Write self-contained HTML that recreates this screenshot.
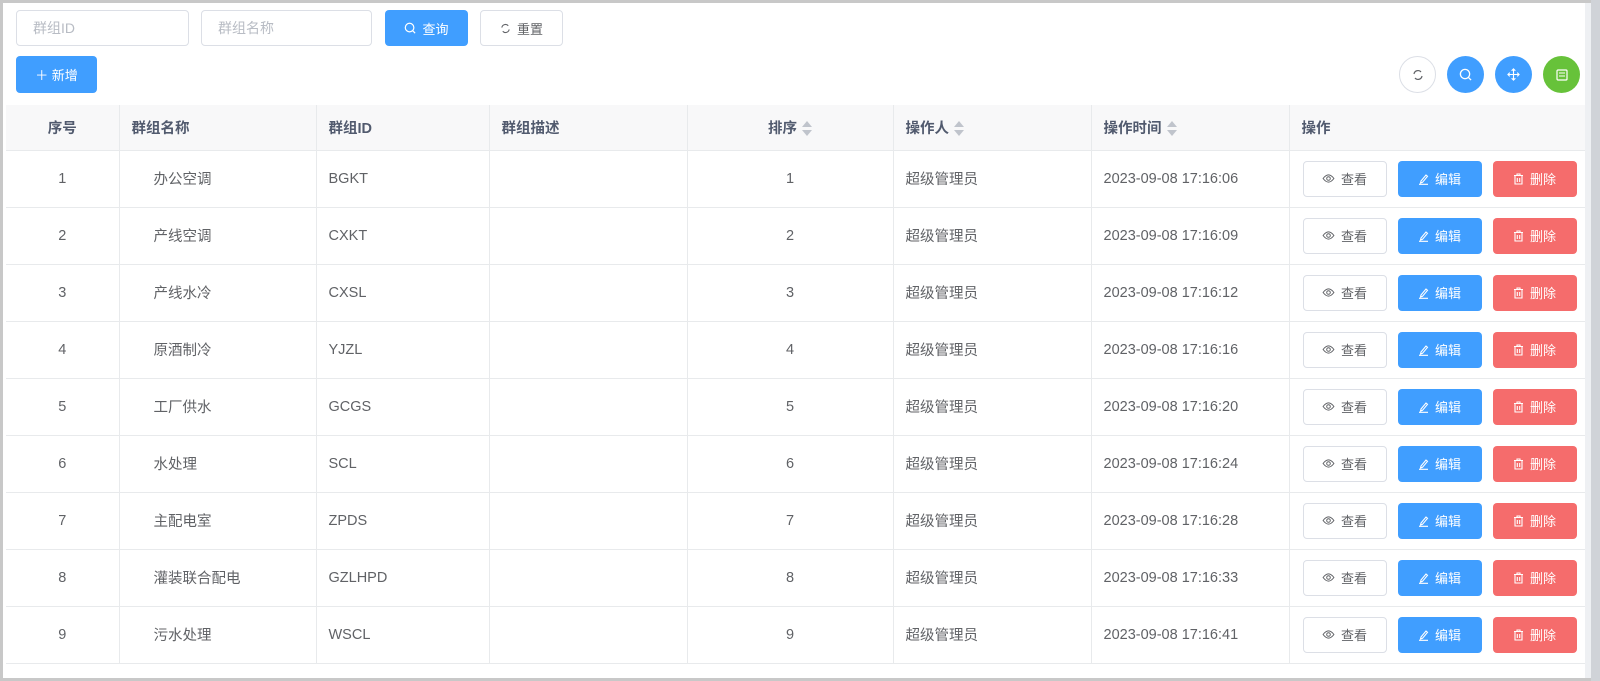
<!DOCTYPE html>
<html><head><meta charset="utf-8"><style>
*{box-sizing:border-box;margin:0;padding:0}
body{width:1600px;height:681px;background:#fff;font-family:"Liberation Sans","Noto Sans CJK SC",sans-serif;font-size:14px;color:#606266;position:relative;overflow:hidden}
.frame{position:absolute;left:0;top:0;width:1600px;height:681px;border-left:3px solid #c8c8c8;border-top:3px solid #c8c8c8;border-bottom:3px solid #c8c8c8;}
.rs{position:absolute;left:1585px;top:3px;width:6px;height:675px;background:#eef0f3}
.rs2{position:absolute;left:1591px;top:0;width:9px;height:681px;background:#d0d3d8}
.abs{position:absolute}
.inp{border:1px solid #dcdfe6;border-radius:4px;height:36px;top:10px;color:#b8bcc4;padding-left:16px;line-height:34px;font-size:14px}
.btn{border-radius:4px;height:36px;font-size:13px;display:flex;align-items:center;justify-content:center;gap:6px}
.blue{background:#409eff;color:#fff}
.red{background:#f56c6c;color:#fff}
.plain{border:1px solid #dcdfe6;color:#606266;background:#fff}
.circ{width:37px;height:37px;border-radius:50%;top:56px;display:flex;align-items:center;justify-content:center}
table{position:absolute;left:6px;top:105px;width:1579px;border-collapse:collapse;table-layout:fixed}
th{background:#f8f8f9;height:45px;text-align:left;font-weight:bold;color:#515a6e;padding-left:12px;border-bottom:1px solid #e8eaec;border-right:1px solid #e8eaec;font-size:14.5px}
td{height:57px;border-bottom:1px solid #e8eaec;border-right:1px solid #e8eaec;padding-left:12px;font-size:14.5px}
th:last-child,td:last-child{border-right:none}
.c{text-align:center;padding-left:0}
.sort{display:inline-block;vertical-align:middle;margin-left:5px;width:10px;height:16px;position:relative}
.sort:before{content:"";position:absolute;left:0;top:0;border:5px solid transparent;border-bottom:6px solid #c0c4cc;border-top:0}
.sort:after{content:"";position:absolute;left:0;top:9px;border:5px solid transparent;border-top:6px solid #c0c4cc;border-bottom:0}
.ops{display:flex;gap:11px;padding-left:1px}
.ops .btn{width:84px}
</style></head><body>
<div class="frame"></div><div class="rs"></div><div class="rs2"></div>
<div class="abs inp" style="left:16px;width:173px">群组ID</div>
<div class="abs inp" style="left:201px;width:171px">群组名称</div>
<div class="abs btn blue" style="left:385px;top:10px;width:83px"><svg width="12" height="12" viewBox="0 0 14 14"><circle cx="6.5" cy="6.5" r="5" fill="none" stroke="#fff" stroke-width="1.4"/><path d="M10 10l3 3" stroke="#fff" stroke-width="1.4"/></svg>查询</div>
<div class="abs btn plain" style="left:480px;top:10px;width:83px"><svg width="11" height="11" viewBox="0 0 12 12"><path d="M2 5a4 4 0 0 1 7-2M10 7a4 4 0 0 1-7 2" fill="none" stroke="#606266" stroke-width="1.2"/></svg>重置</div>
<div class="abs btn blue" style="left:16px;top:56px;width:81px;height:37px">＋ 新增</div>
<div class="abs circ" style="left:1399px;border:1px solid #dcdfe6"><svg width="12" height="12" viewBox="0 0 12 12"><path d="M2 5a4 4 0 0 1 7-2M10 7a4 4 0 0 1-7 2" fill="none" stroke="#606266" stroke-width="1.2"/></svg></div>
<div class="abs circ blue" style="left:1447px"><svg width="13" height="13" viewBox="0 0 14 14"><circle cx="6.5" cy="6.5" r="5" fill="none" stroke="#fff" stroke-width="1.4"/><path d="M10 10l3 3" stroke="#fff" stroke-width="1.4"/></svg></div>
<div class="abs circ blue" style="left:1495px"><svg width="13" height="13" viewBox="0 0 14 14"><path d="M7 1v12M1 7h12M5 3l2-2 2 2M5 11l2 2 2-2M3 5L1 7l2 2M11 5l2 2-2 2" fill="none" stroke="#fff" stroke-width="1.2"/></svg></div>
<div class="abs circ" style="left:1543px;background:#67c23a"><svg width="12" height="12" viewBox="0 0 12 12"><rect x="1" y="1" width="10" height="10" rx="1" fill="none" stroke="#fff" stroke-width="1.2"/><path d="M3 4h6M3 7h6" stroke="#fff"/></svg></div>
<table>
<colgroup><col style="width:113px"><col style="width:197px"><col style="width:173px"><col style="width:198px"><col style="width:206px"><col style="width:198px"><col style="width:198px"><col></colgroup>
<tr><th class="c">序号</th><th>群组名称</th><th>群组ID</th><th>群组描述</th><th class="c">排序<span class="sort"></span></th><th>操作人<span class="sort"></span></th><th>操作时间<span class="sort"></span></th><th>操作</th></tr>
<tr><td class="c">1</td><td style="padding-left:34px">办公空调</td><td>BGKT</td><td></td><td class="c">1</td><td>超级管理员</td><td>2023-09-08 17:16:06</td><td><div class="ops"><div class="btn plain"><svg width="13" height="9" viewBox="0 0 14 10"><path d="M1 5q6-8 12 0q-6 8-12 0z" fill="none" stroke="#606266" stroke-width="1.1"/><circle cx="7" cy="5" r="2" fill="none" stroke="#606266" stroke-width="1.1"/></svg>查看</div><div class="btn blue"><svg width="11" height="12" viewBox="0 0 11 12"><path d="M3 8l5-6 1.5 1.3-5 6L2.5 10z M1 11.3h9" fill="none" stroke="#fff" stroke-width="1.1"/></svg>编辑</div><div class="btn red"><svg width="11" height="12" viewBox="0 0 11 12"><path d="M1 2.5h9M4 2.5V1h3v1.5M2 2.5v8.5h7V2.5M4.3 5v4M6.7 5v4" fill="none" stroke="#fff" stroke-width="1.1"/></svg>删除</div></div></td></tr>
<tr><td class="c">2</td><td style="padding-left:34px">产线空调</td><td>CXKT</td><td></td><td class="c">2</td><td>超级管理员</td><td>2023-09-08 17:16:09</td><td><div class="ops"><div class="btn plain"><svg width="13" height="9" viewBox="0 0 14 10"><path d="M1 5q6-8 12 0q-6 8-12 0z" fill="none" stroke="#606266" stroke-width="1.1"/><circle cx="7" cy="5" r="2" fill="none" stroke="#606266" stroke-width="1.1"/></svg>查看</div><div class="btn blue"><svg width="11" height="12" viewBox="0 0 11 12"><path d="M3 8l5-6 1.5 1.3-5 6L2.5 10z M1 11.3h9" fill="none" stroke="#fff" stroke-width="1.1"/></svg>编辑</div><div class="btn red"><svg width="11" height="12" viewBox="0 0 11 12"><path d="M1 2.5h9M4 2.5V1h3v1.5M2 2.5v8.5h7V2.5M4.3 5v4M6.7 5v4" fill="none" stroke="#fff" stroke-width="1.1"/></svg>删除</div></div></td></tr>
<tr><td class="c">3</td><td style="padding-left:34px">产线水冷</td><td>CXSL</td><td></td><td class="c">3</td><td>超级管理员</td><td>2023-09-08 17:16:12</td><td><div class="ops"><div class="btn plain"><svg width="13" height="9" viewBox="0 0 14 10"><path d="M1 5q6-8 12 0q-6 8-12 0z" fill="none" stroke="#606266" stroke-width="1.1"/><circle cx="7" cy="5" r="2" fill="none" stroke="#606266" stroke-width="1.1"/></svg>查看</div><div class="btn blue"><svg width="11" height="12" viewBox="0 0 11 12"><path d="M3 8l5-6 1.5 1.3-5 6L2.5 10z M1 11.3h9" fill="none" stroke="#fff" stroke-width="1.1"/></svg>编辑</div><div class="btn red"><svg width="11" height="12" viewBox="0 0 11 12"><path d="M1 2.5h9M4 2.5V1h3v1.5M2 2.5v8.5h7V2.5M4.3 5v4M6.7 5v4" fill="none" stroke="#fff" stroke-width="1.1"/></svg>删除</div></div></td></tr>
<tr><td class="c">4</td><td style="padding-left:34px">原酒制冷</td><td>YJZL</td><td></td><td class="c">4</td><td>超级管理员</td><td>2023-09-08 17:16:16</td><td><div class="ops"><div class="btn plain"><svg width="13" height="9" viewBox="0 0 14 10"><path d="M1 5q6-8 12 0q-6 8-12 0z" fill="none" stroke="#606266" stroke-width="1.1"/><circle cx="7" cy="5" r="2" fill="none" stroke="#606266" stroke-width="1.1"/></svg>查看</div><div class="btn blue"><svg width="11" height="12" viewBox="0 0 11 12"><path d="M3 8l5-6 1.5 1.3-5 6L2.5 10z M1 11.3h9" fill="none" stroke="#fff" stroke-width="1.1"/></svg>编辑</div><div class="btn red"><svg width="11" height="12" viewBox="0 0 11 12"><path d="M1 2.5h9M4 2.5V1h3v1.5M2 2.5v8.5h7V2.5M4.3 5v4M6.7 5v4" fill="none" stroke="#fff" stroke-width="1.1"/></svg>删除</div></div></td></tr>
<tr><td class="c">5</td><td style="padding-left:34px">工厂供水</td><td>GCGS</td><td></td><td class="c">5</td><td>超级管理员</td><td>2023-09-08 17:16:20</td><td><div class="ops"><div class="btn plain"><svg width="13" height="9" viewBox="0 0 14 10"><path d="M1 5q6-8 12 0q-6 8-12 0z" fill="none" stroke="#606266" stroke-width="1.1"/><circle cx="7" cy="5" r="2" fill="none" stroke="#606266" stroke-width="1.1"/></svg>查看</div><div class="btn blue"><svg width="11" height="12" viewBox="0 0 11 12"><path d="M3 8l5-6 1.5 1.3-5 6L2.5 10z M1 11.3h9" fill="none" stroke="#fff" stroke-width="1.1"/></svg>编辑</div><div class="btn red"><svg width="11" height="12" viewBox="0 0 11 12"><path d="M1 2.5h9M4 2.5V1h3v1.5M2 2.5v8.5h7V2.5M4.3 5v4M6.7 5v4" fill="none" stroke="#fff" stroke-width="1.1"/></svg>删除</div></div></td></tr>
<tr><td class="c">6</td><td style="padding-left:34px">水处理</td><td>SCL</td><td></td><td class="c">6</td><td>超级管理员</td><td>2023-09-08 17:16:24</td><td><div class="ops"><div class="btn plain"><svg width="13" height="9" viewBox="0 0 14 10"><path d="M1 5q6-8 12 0q-6 8-12 0z" fill="none" stroke="#606266" stroke-width="1.1"/><circle cx="7" cy="5" r="2" fill="none" stroke="#606266" stroke-width="1.1"/></svg>查看</div><div class="btn blue"><svg width="11" height="12" viewBox="0 0 11 12"><path d="M3 8l5-6 1.5 1.3-5 6L2.5 10z M1 11.3h9" fill="none" stroke="#fff" stroke-width="1.1"/></svg>编辑</div><div class="btn red"><svg width="11" height="12" viewBox="0 0 11 12"><path d="M1 2.5h9M4 2.5V1h3v1.5M2 2.5v8.5h7V2.5M4.3 5v4M6.7 5v4" fill="none" stroke="#fff" stroke-width="1.1"/></svg>删除</div></div></td></tr>
<tr><td class="c">7</td><td style="padding-left:34px">主配电室</td><td>ZPDS</td><td></td><td class="c">7</td><td>超级管理员</td><td>2023-09-08 17:16:28</td><td><div class="ops"><div class="btn plain"><svg width="13" height="9" viewBox="0 0 14 10"><path d="M1 5q6-8 12 0q-6 8-12 0z" fill="none" stroke="#606266" stroke-width="1.1"/><circle cx="7" cy="5" r="2" fill="none" stroke="#606266" stroke-width="1.1"/></svg>查看</div><div class="btn blue"><svg width="11" height="12" viewBox="0 0 11 12"><path d="M3 8l5-6 1.5 1.3-5 6L2.5 10z M1 11.3h9" fill="none" stroke="#fff" stroke-width="1.1"/></svg>编辑</div><div class="btn red"><svg width="11" height="12" viewBox="0 0 11 12"><path d="M1 2.5h9M4 2.5V1h3v1.5M2 2.5v8.5h7V2.5M4.3 5v4M6.7 5v4" fill="none" stroke="#fff" stroke-width="1.1"/></svg>删除</div></div></td></tr>
<tr><td class="c">8</td><td style="padding-left:34px">灌装联合配电</td><td>GZLHPD</td><td></td><td class="c">8</td><td>超级管理员</td><td>2023-09-08 17:16:33</td><td><div class="ops"><div class="btn plain"><svg width="13" height="9" viewBox="0 0 14 10"><path d="M1 5q6-8 12 0q-6 8-12 0z" fill="none" stroke="#606266" stroke-width="1.1"/><circle cx="7" cy="5" r="2" fill="none" stroke="#606266" stroke-width="1.1"/></svg>查看</div><div class="btn blue"><svg width="11" height="12" viewBox="0 0 11 12"><path d="M3 8l5-6 1.5 1.3-5 6L2.5 10z M1 11.3h9" fill="none" stroke="#fff" stroke-width="1.1"/></svg>编辑</div><div class="btn red"><svg width="11" height="12" viewBox="0 0 11 12"><path d="M1 2.5h9M4 2.5V1h3v1.5M2 2.5v8.5h7V2.5M4.3 5v4M6.7 5v4" fill="none" stroke="#fff" stroke-width="1.1"/></svg>删除</div></div></td></tr>
<tr><td class="c">9</td><td style="padding-left:34px">污水处理</td><td>WSCL</td><td></td><td class="c">9</td><td>超级管理员</td><td>2023-09-08 17:16:41</td><td><div class="ops"><div class="btn plain"><svg width="13" height="9" viewBox="0 0 14 10"><path d="M1 5q6-8 12 0q-6 8-12 0z" fill="none" stroke="#606266" stroke-width="1.1"/><circle cx="7" cy="5" r="2" fill="none" stroke="#606266" stroke-width="1.1"/></svg>查看</div><div class="btn blue"><svg width="11" height="12" viewBox="0 0 11 12"><path d="M3 8l5-6 1.5 1.3-5 6L2.5 10z M1 11.3h9" fill="none" stroke="#fff" stroke-width="1.1"/></svg>编辑</div><div class="btn red"><svg width="11" height="12" viewBox="0 0 11 12"><path d="M1 2.5h9M4 2.5V1h3v1.5M2 2.5v8.5h7V2.5M4.3 5v4M6.7 5v4" fill="none" stroke="#fff" stroke-width="1.1"/></svg>删除</div></div></td></tr>
</table>
</body></html>
